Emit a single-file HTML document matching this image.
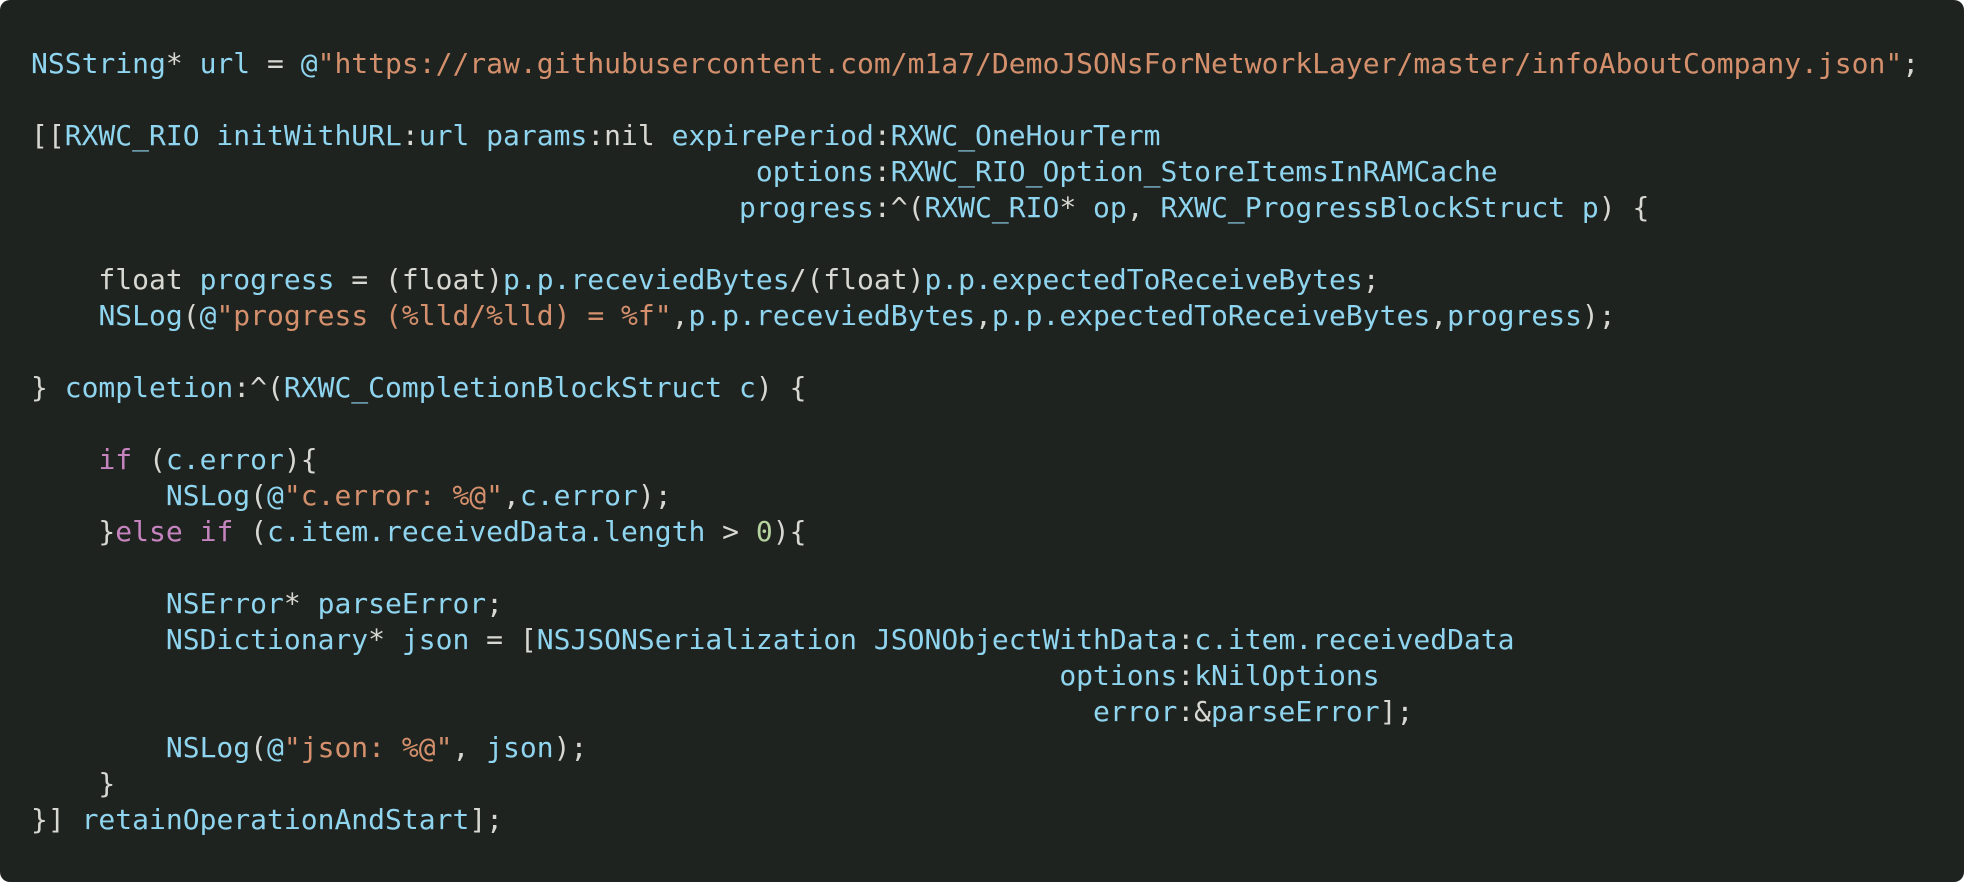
<!DOCTYPE html>
<html><head><meta charset="utf-8"><style>
html,body{margin:0;padding:0;background:#fff;width:1964px;height:882px;overflow:hidden}
.box{position:absolute;left:0;top:0;width:1964px;height:882px;background:#1f231f;border-radius:10px}
pre{position:absolute;left:31px;top:46px;margin:0;font-family:"DejaVu Sans Mono","Liberation Mono",monospace;font-size:28px;line-height:36px;color:#d8d8d2;white-space:pre}
.c{color:#8fd5f0}.s{color:#d4906c}.k{color:#c684bf}.n{color:#b6d2a0}
</style></head><body><div class="box"><pre><span class="c">NSString</span>* <span class="c">url</span> = <span class="c">@</span><span class="s">"https://raw.githubusercontent.com/m1a7/DemoJSONsForNetworkLayer/master/infoAboutCompany.json"</span>;

[[<span class="c">RXWC_RIO initWithURL</span>:<span class="c">url params</span>:nil <span class="c">expirePeriod</span>:<span class="c">RXWC_OneHourTerm</span>
                                           <span class="c">options</span>:<span class="c">RXWC_RIO_Option_StoreItemsInRAMCache</span>
                                          <span class="c">progress</span>:^(<span class="c">RXWC_RIO</span>* <span class="c">op</span>, <span class="c">RXWC_ProgressBlockStruct p</span>) {

    float <span class="c">progress</span> = (float)<span class="c">p.p.receviedBytes</span>/(float)<span class="c">p.p.expectedToReceiveBytes</span>;
    <span class="c">NSLog</span>(<span class="c">@</span><span class="s">"progress (%lld/%lld) = %f"</span>,<span class="c">p.p.receviedBytes</span>,<span class="c">p.p.expectedToReceiveBytes</span>,<span class="c">progress</span>);

} <span class="c">completion</span>:^(<span class="c">RXWC_CompletionBlockStruct c</span>) {

    <span class="k">if</span> (<span class="c">c.error</span>){
        <span class="c">NSLog</span>(<span class="c">@</span><span class="s">"c.error: %@"</span>,<span class="c">c.error</span>);
    }<span class="k">else if</span> (<span class="c">c.item.receivedData.length</span> &gt; <span class="n">0</span>){

        <span class="c">NSError</span>* <span class="c">parseError</span>;
        <span class="c">NSDictionary</span>* <span class="c">json</span> = [<span class="c">NSJSONSerialization JSONObjectWithData</span>:<span class="c">c.item.receivedData</span>
                                                             <span class="c">options</span>:<span class="c">kNilOptions</span>
                                                               <span class="c">error</span>:&amp;<span class="c">parseError</span>];
        <span class="c">NSLog</span>(<span class="c">@</span><span class="s">"json: %@"</span>, <span class="c">json</span>);
    }
}] <span class="c">retainOperationAndStart</span>];</pre></div></body></html>
